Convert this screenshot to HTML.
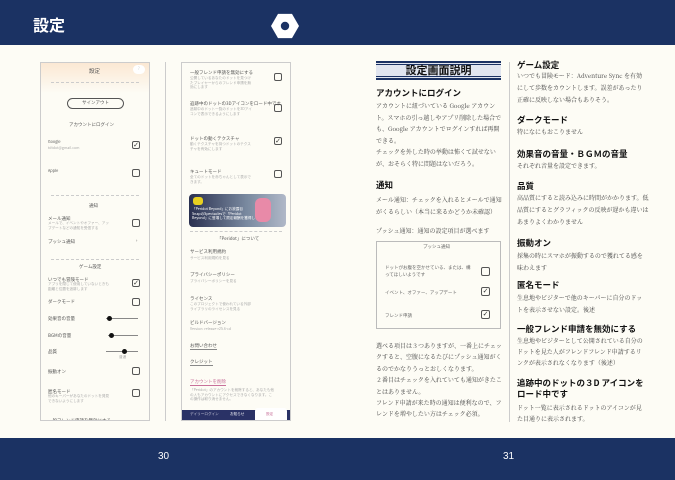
<!DOCTYPE html>
<html><head><meta charset="utf-8"><style>
*{margin:0;padding:0;box-sizing:border-box}
body{width:675px;height:480px;background:#fdfcf5;position:relative;overflow:hidden;font-family:"Noto Serif CJK SC",serif;color:#333}
.a{position:absolute;white-space:nowrap}
.hd{position:absolute;left:0;top:0;width:675px;height:45px;background:#1b3263}
.ft{position:absolute;left:0;top:438px;width:675px;height:42px;background:#1b3263;color:#fff;font:10px "Liberation Sans",sans-serif}
.h{font-family:"Noto Sans CJK JP",sans-serif;font-weight:bold;font-size:8.5px;color:#111;line-height:11px}
.t{font-family:"Noto Serif CJK SC",serif;font-size:6px;color:#444;line-height:12px}
.p{font-family:"Noto Sans CJK JP",sans-serif;font-size:4.5px;color:#555;line-height:6px}
.ps{font-family:"Noto Sans CJK JP",sans-serif;font-size:3.6px;color:#aaa;line-height:4.5px}
.cb{position:absolute;width:8px;height:8px;border:1px solid #555;border-radius:2px;font-size:7px;line-height:6px;text-align:center;color:#333;font-family:"DejaVu Sans",sans-serif}
.dash{position:absolute;height:0;border-top:1px dashed #ccc}
</style></head><body>
<div class="hd"></div>
<div class="a" style="left:33px;top:14px;color:#fff;font:bold 16px 'Noto Sans CJK JP',sans-serif;line-height:20px">設定</div>
<svg class="a" style="left:271px;top:13px" width="28" height="26" viewBox="0 0 30 26"><polygon points="7.5,0 22.5,0 30,13 22.5,26 7.5,26 0,13" fill="#fff"/><circle cx="15" cy="13" r="4.5" fill="#1b3263"/></svg>

<!-- left phone -->
<div class="a" style="left:40px;top:62px;width:110px;height:359px;border:1px solid #ccc;background:linear-gradient(#fbe8d3,#fdfcf5 30px);overflow:hidden">
<div class="a p" style="left:48px;top:5px;font-size:5.5px">設定</div>
<div class="a" style="left:92px;top:2px;width:12px;height:9px;background:#fff;border-radius:6px;font-size:5px;color:#ccc;text-align:center">?</div>
<div class="dash" style="left:10px;right:10px;top:19px"></div>
<div class="a p" style="left:26px;top:35px;width:57px;height:11px;border:1px solid #555;border-radius:6px;text-align:center;line-height:9px">サインアウト</div>
<div class="a p" style="left:28px;top:59px">アカウントにログイン</div>
<div class="a p" style="left:7px;top:77px;font-size:3.8px">Google</div>
<div class="a ps" style="left:7px;top:84px">tdtdot@gmail.com</div>
<div class="cb" style="left:91px;top:78px">✓</div>
<div class="a p" style="left:7px;top:106px;font-size:3.8px">Apple</div>
<div class="cb" style="left:91px;top:106px"></div>
<div class="dash" style="left:10px;right:10px;top:132px"></div>
<div class="a p" style="left:48px;top:140px">通知</div>
<div class="a p" style="left:7px;top:153px">メール通知</div>
<div class="a ps" style="left:7px;top:159px">メールで、イベントやオファー、アッ<br>プデートなどの通知を受信する</div>
<div class="cb" style="left:91px;top:156px"></div>
<div class="a p" style="left:7px;top:176px">プッシュ通知</div>
<div class="a p" style="left:95px;top:175px">›</div>
<div class="dash" style="left:10px;right:10px;top:196px"></div>
<div class="a p" style="left:38px;top:201px">ゲーム設定</div>
<div class="a p" style="left:7px;top:214px">いつでも冒険モード</div>
<div class="a ps" style="left:7px;top:220px">アプリを閉じて使用していないときも<br>距離と位置を追跡します</div>
<div class="cb" style="left:91px;top:216px">✓</div>
<div class="a p" style="left:7px;top:236px">ダークモード</div>
<div class="cb" style="left:91px;top:235px"></div>
<div class="a p" style="left:7px;top:253px">効果音の音量</div>
<div class="a" style="left:65px;top:255px;width:32px;border-top:1px solid #888"></div><div class="a" style="left:66px;top:253px;width:5px;height:5px;border-radius:3px;background:#111"></div>
<div class="a p" style="left:7px;top:270px">BGMの音量</div>
<div class="a" style="left:67px;top:272px;width:30px;border-top:1px solid #888"></div><div class="a" style="left:68px;top:270px;width:5px;height:5px;border-radius:3px;background:#111"></div>
<div class="a p" style="left:7px;top:286px">品質</div>
<div class="a" style="left:65px;top:288px;width:32px;border-top:1px solid #888"></div><div class="a" style="left:81px;top:286px;width:5px;height:5px;border-radius:3px;background:#111"></div>
<div class="a ps" style="left:78px;top:293px">普通</div>
<div class="a p" style="left:7px;top:306px">振動オン</div>
<div class="cb" style="left:91px;top:304px"></div>
<div class="a p" style="left:7px;top:326px">匿名モード</div>
<div class="a ps" style="left:7px;top:332px">他のキーパーがあなたのドットを発見<br>できないようにします</div>
<div class="cb" style="left:91px;top:326px"></div>
<div class="a p" style="left:7px;top:355px">一般フレンド申請を無効にする</div>
</div>
<div class="a" style="left:165px;top:62px;height:359px;border-left:1px solid #ccc"></div>

<!-- right phone -->
<div class="a" style="left:181px;top:62px;width:110px;height:359px;border:1px solid #ccc;background:#fdfcf5;overflow:hidden">
<div class="a p" style="left:8px;top:7px">一般フレンド申請を無効にする</div>
<div class="a ps" style="left:8px;top:14px">公開しているあなたのドットを見つけ<br>たプレイヤーからのフレンド申請を無<br>効にします</div>
<div class="cb" style="left:92px;top:10px"></div>
<div class="a p" style="left:8px;top:38px">追跡中のドットの3Dアイコンをロード中です</div>
<div class="a ps" style="left:8px;top:45px">追跡中のドット一覧のドットを3Dアイ<br>コンで表示できるようにします</div>
<div class="cb" style="left:92px;top:41px"></div>
<div class="a p" style="left:8px;top:73px">ドットの動くテクスチャ</div>
<div class="a ps" style="left:8px;top:80px">動くテクスチャを持つドットのテクス<br>チャを有効にします</div>
<div class="cb" style="left:92px;top:74px">✓</div>
<div class="a p" style="left:8px;top:106px">キュートモード</div>
<div class="a ps" style="left:8px;top:113px">全てのドットを赤ちゃんとして表示で<br>きます。</div>
<div class="cb" style="left:92px;top:107px"></div>
<div class="a" style="left:7px;top:131px;width:97px;height:33px;border-radius:4px;background:linear-gradient(90deg,#2a3050,#7a8aa0 60%,#b0b8c8);overflow:hidden">
<div class="a" style="left:4px;top:3px;width:10px;height:8px;background:#e8d020;border-radius:3px"></div>
<div class="a" style="left:66px;top:4px;width:16px;height:24px;background:#e88aa8;border-radius:6px"></div>
<div class="a ps" style="left:3px;top:14px;color:#fff">「Peridot Beyond」にお披露目<br>SnapのSpectaclesで「Peridot<br>Beyond」に登場して限定報酬を獲得し</div>
</div>
<div class="dash" style="left:8px;right:8px;top:168px"></div>
<div class="a p" style="left:35px;top:173px">「Peridot」について</div>
<div class="a p" style="left:8px;top:186px">サービス利用規約</div>
<div class="a ps" style="left:8px;top:194px">サービス利用規約を見る</div>
<div class="a p" style="left:8px;top:209px">プライバシーポリシー</div>
<div class="a ps" style="left:8px;top:217px">プライバシーポリシーを見る</div>
<div class="a p" style="left:8px;top:233px">ライセンス</div>
<div class="a ps" style="left:8px;top:240px">このプロジェクトで使われている外部<br>ライブラリのライセンスを見る</div>
<div class="a p" style="left:8px;top:257px">ビルドバージョン</div>
<div class="a ps" style="left:8px;top:265px">Version: release-r25.6-cd</div>
<div class="a p" style="left:8px;top:280px;border-bottom:1px solid #888">お問い合わせ</div>
<div class="a p" style="left:8px;top:296px;border-bottom:1px solid #888">クレジット</div>
<div class="a p" style="left:8px;top:316px;color:#c8709a;border-bottom:1px solid #c8709a">アカウントを削除</div>
<div class="a ps" style="left:8px;top:326px">「Peridot」のアカウントを削除すると、あなたも他<br>の人もアカウントにアクセスできなくなります。こ<br>の操作は取り消せません。</div>
<div class="a" style="left:0;top:347px;width:110px;height:13px;background:#2a3266"></div>
<div class="a ps" style="left:8px;top:350px;color:#ccd">デイリーログイン</div>
<div class="a ps" style="left:48px;top:350px;color:#fff">お知らせ</div>
<div class="a" style="left:73px;top:345px;width:32px;height:14px;background:#fff;border-radius:3px 3px 0 0"></div>
<div class="a ps" style="left:84px;top:350px;color:#c8709a">設定</div>
</div>

<!-- right page -->
<div class="a" style="left:376px;top:61px;width:125px;height:19px;background:#e1e5ef;border-top:2px solid #1b3263;border-bottom:2px solid #1b3263"></div>
<div class="a" style="left:376px;top:64px;width:125px;border-top:1px solid #1b3263"></div>
<div class="a" style="left:376px;top:76px;width:125px;border-top:1px solid #1b3263"></div>
<div class="a h" style="left:376px;top:64px;width:125px;text-align:center;font-size:11px;line-height:13px">設定画面説明</div>

<div class="a h" style="left:376px;top:88px">アカウントにログイン</div>
<div class="a t" style="left:376px;top:100px;white-space:normal;width:128px;line-height:11.5px">アカウントに紐づいている Google アカウント。スマホの引っ越しやアプリ削除した場合でも、Google アカウントでログインすれば再開できる。<br>チェックを外した時の挙動は怖くて試せないが、おそらく特に問題はないだろう。</div>
<div class="a h" style="left:376px;top:180px">通知</div>
<div class="a t" style="left:376px;top:194px;white-space:normal;width:128px;line-height:12px">メール通知：チェックを入れるとメールで通知がくるらしい（本当に来るかどうか未確認）</div>
<div class="a t" style="left:376px;top:225px">プッシュ通知：通知の設定項目が選べます</div>
<div class="a" style="left:376px;top:241px;width:125px;height:88px;border:1px solid #bbb"></div>
<div class="a p" style="left:423px;top:244px;color:#666">プッシュ通知</div>
<div class="a p" style="left:385px;top:265px;color:#666;line-height:7px">ドットがお腹を空かせている、または、構<br>ってほしいようです</div>
<div class="cb" style="left:481px;top:267px;width:9px;height:9px"></div>
<div class="a p" style="left:385px;top:290px;color:#666">イベント、オファー、アップデート</div>
<div class="cb" style="left:481px;top:287px;width:9px;height:9px">✓</div>
<div class="a p" style="left:385px;top:313px;color:#666">フレンド申請</div>
<div class="cb" style="left:481px;top:310px;width:9px;height:9px">✓</div>
<div class="a t" style="left:376px;top:340px;white-space:normal;width:128px;line-height:11.4px">選べる項目は３つありますが、一番上にチェックすると、空腹になるたびにプッシュ通知がくるのでかなりうっとおしくなります。<br>２番目はチェックを入れていても通知がきたことはありません。<br>フレンド申請が来た時の通知は便利なので、フレンドを増やしたい方はチェック必須。</div>

<div class="a" style="left:509px;top:62px;height:360px;border-left:1px solid #ccc"></div>

<div class="a h" style="left:517px;top:60px">ゲーム設定</div>
<div class="a t" style="left:517px;top:70px;white-space:normal;width:130px">いつでも冒険モード：Adventure Sync を有効にして歩数をカウントします。誤差があったり正確に反映しない場合もありそう。</div>
<div class="a h" style="left:517px;top:115px">ダークモード</div>
<div class="a t" style="left:517px;top:126px">特になにもおこりません</div>
<div class="a h" style="left:517px;top:149px">効果音の音量・ＢＧＭの音量</div>
<div class="a t" style="left:517px;top:160px">それぞれ音量を設定できます。</div>
<div class="a h" style="left:517px;top:181px">品質</div>
<div class="a t" style="left:517px;top:192px;white-space:normal;width:132px">高品質にすると読み込みに時間がかかります。低品質にするとグラフィックの反映が遅かも違いはあまりよくわかりません</div>
<div class="a h" style="left:517px;top:238px">振動オン</div>
<div class="a t" style="left:517px;top:250px;white-space:normal;width:130px">採集の時にスマホが振動するので獲れてる感を味わえます</div>
<div class="a h" style="left:517px;top:280px">匿名モード</div>
<div class="a t" style="left:517px;top:292px;white-space:normal;width:130px">生息地やビジターで他のキーパーに自分のドットを表示させない設定。後述</div>
<div class="a h" style="left:517px;top:324px">一般フレンド申請を無効にする</div>
<div class="a t" style="left:517px;top:335px;white-space:normal;width:130px;line-height:11px">生息地やビジターとして公開されている自分のドットを見た人がフレンドフレンド申請するリンクが表示されなくなります（後述）</div>
<div class="a h" style="left:517px;top:378px;white-space:normal;width:128px;line-height:11px">追跡中のドットの３D アイコンをロード中です</div>
<div class="a t" style="left:517px;top:402px;white-space:normal;width:130px;line-height:11px">ドット一覧に表示されるドットのアイコンが見た目通りに表示されます。</div>

<div class="ft"><span class="a" style="left:158px;top:13px">30</span><span class="a" style="left:503px;top:13px">31</span></div>
</body></html>
